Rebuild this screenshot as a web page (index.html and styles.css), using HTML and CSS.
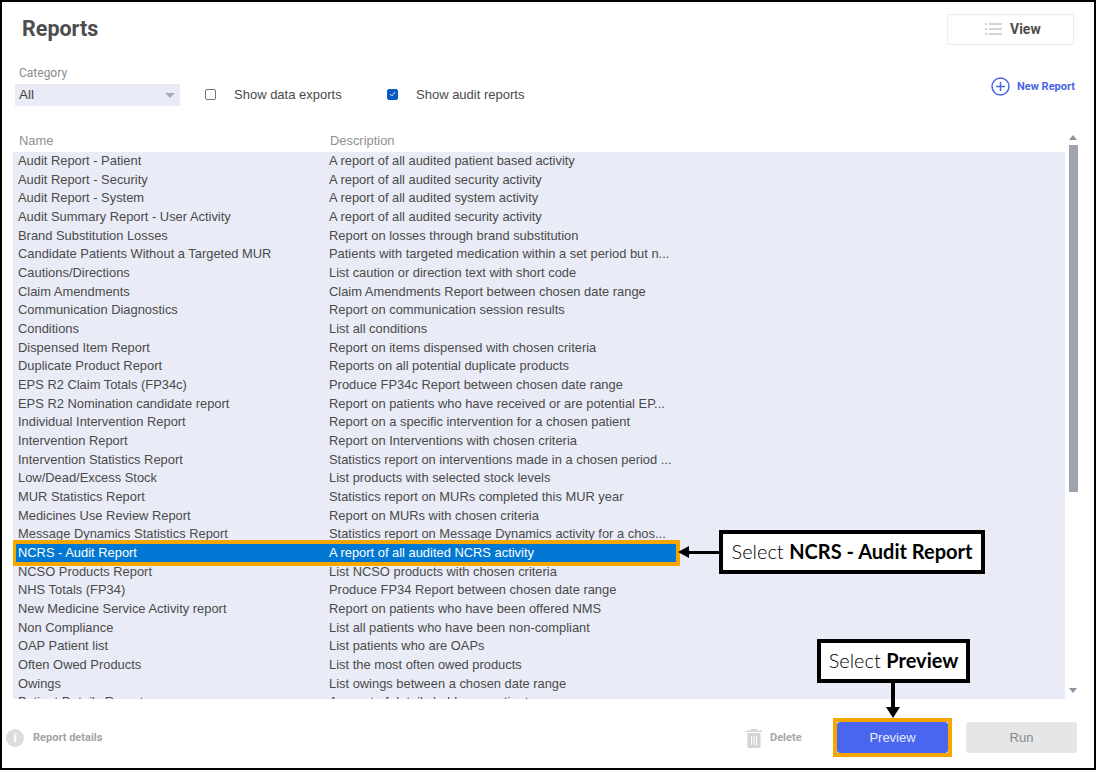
FILE: index.html
```html
<!DOCTYPE html>
<html lang="en">
<head>
<meta charset="utf-8">
<title>Reports</title>
<link rel="stylesheet" href="styles.css">
</head>
<body>
<div class="app">
  <header class="top">
    <h1 class="title">Reports</h1>
    <button class="view-btn">
      <svg class="view-icon" width="17" height="12" viewBox="0 0 17 12"><path d="M0 1h2M4 1h13M0 6h2M4 6h13M0 11h2M4 11h13" stroke="#a8a8a8" stroke-width="1.2" fill="none"/></svg>
      <span>View</span>
    </button>
  </header>
  <section class="filters">
    <div class="category">
      <label class="cat-label">Category</label>
      <div class="select"><span>All</span><i class="caret"></i></div>
    </div>
    <div class="check first"><i class="box"></i><span>Show data exports</span></div>
    <div class="check second">
      <i class="box on"><svg width="7" height="6" viewBox="0 0 7 6"><path d="M1 3l2 2 3-4" stroke="#cfe0f5" stroke-width="1" fill="none"/></svg></i>
      <span>Show audit reports</span>
    </div>
    <div class="new-report">
      <svg width="19" height="19" viewBox="0 0 19 19"><circle cx="9.5" cy="9.5" r="8.5" stroke="#4a66e8" stroke-width="1.5" fill="none"/><path d="M9.5 5v9M5 9.5h9" stroke="#4a66e8" stroke-width="1.5"/></svg>
      <span>New Report</span>
    </div>
  </section>
  <section class="table-wrap">
    <div class="table">
      <div class="thead"><span>Name</span><span>Description</span></div>
      <div class="list">
        <div class="row"><span>Audit Report - Patient</span><span>A report of all audited patient based activity</span></div>
        <div class="row"><span>Audit Report - Security</span><span>A report of all audited security activity</span></div>
        <div class="row"><span>Audit Report - System</span><span>A report of all audited system activity</span></div>
        <div class="row"><span>Audit Summary Report - User Activity</span><span>A report of all audited security activity</span></div>
        <div class="row"><span>Brand Substitution Losses</span><span>Report on losses through brand substitution</span></div>
        <div class="row"><span>Candidate Patients Without a Targeted MUR</span><span>Patients with targeted medication within a set period but n...</span></div>
        <div class="row"><span>Cautions/Directions</span><span>List caution or direction text with short code</span></div>
        <div class="row"><span>Claim Amendments</span><span>Claim Amendments Report between chosen date range</span></div>
        <div class="row"><span>Communication Diagnostics</span><span>Report on communication session results</span></div>
        <div class="row"><span>Conditions</span><span>List all conditions</span></div>
        <div class="row"><span>Dispensed Item Report</span><span>Report on items dispensed with chosen criteria</span></div>
        <div class="row"><span>Duplicate Product Report</span><span>Reports on all potential duplicate products</span></div>
        <div class="row"><span>EPS R2 Claim Totals (FP34c)</span><span>Produce FP34c Report between chosen date range</span></div>
        <div class="row"><span>EPS R2 Nomination candidate report</span><span>Report on patients who have received or are potential EP...</span></div>
        <div class="row"><span>Individual Intervention Report</span><span>Report on a specific intervention for a chosen patient</span></div>
        <div class="row"><span>Intervention Report</span><span>Report on Interventions with chosen criteria</span></div>
        <div class="row"><span>Intervention Statistics Report</span><span>Statistics report on interventions made in a chosen period ...</span></div>
        <div class="row"><span>Low/Dead/Excess Stock</span><span>List products with selected stock levels</span></div>
        <div class="row"><span>MUR Statistics Report</span><span>Statistics report on MURs completed this MUR year</span></div>
        <div class="row"><span>Medicines Use Review Report</span><span>Report on MURs with chosen criteria</span></div>
        <div class="row"><span>Message Dynamics Statistics Report</span><span>Statistics report on Message Dynamics activity for a chos...</span></div>
        <div class="row selected"><span>NCRS - Audit Report</span><span>A report of all audited NCRS activity</span><i class="hl-row"></i></div>
        <div class="row"><span>NCSO Products Report</span><span>List NCSO products with chosen criteria</span></div>
        <div class="row"><span>NHS Totals (FP34)</span><span>Produce FP34 Report between chosen date range</span></div>
        <div class="row"><span>New Medicine Service Activity report</span><span>Report on patients who have been offered NMS</span></div>
        <div class="row"><span>Non Compliance</span><span>List all patients who have been non-compliant</span></div>
        <div class="row"><span>OAP Patient list</span><span>List patients who are OAPs</span></div>
        <div class="row"><span>Often Owed Products</span><span>List the most often owed products</span></div>
        <div class="row"><span>Owings</span><span>List owings between a chosen date range</span></div>
        <div class="row"><span>Patient Details Report</span><span>A report of details held on a patient</span></div>
      </div>
    </div>
    <div class="scrollbar">
      <i class="arrow up"></i>
      <div class="track"><div class="thumb"></div></div>
      <i class="arrow down"></i>
    </div>
  </section>
  <footer class="bottom">
    <div class="details"><i class="info">i</i><span>Report details</span></div>
    <div class="delete">
      <svg width="16" height="20" viewBox="0 0 16 20"><path d="M5 1h6v1.5h5V4H0V2.500h5zM1.500 5h13v15h-13z" fill="#d4d4d4"/><path d="M5.500 8v9M8 8v9M10.500 8v9" stroke="#fff" stroke-width="1"/></svg>
      <span>Delete</span>
    </div>
    <button class="btn preview">Preview<i class="hl-btn"></i></button>
    <button class="btn run">Run</button>
  </footer>
  <div class="callout callout-ncrs">Select <b>NCRS - Audit Report</b></div>
  <div class="arrow-left"></div>
  <div class="callout callout-preview">Select <b>Preview</b></div>
  <div class="arrow-down"></div>
</div>
</body>
</html>
```
FILE: styles.css
```css
* { box-sizing: border-box; }
html, body { margin: 0; padding: 0; background: #fff; }
.app {
  position: relative;
  width: 1096px;
  height: 770px;
  border: 2px solid #000;
  overflow: hidden;
  font-family: "Liberation Sans", Arial, sans-serif;
  color: #4a4a4a;
  display: flex;
  flex-direction: column;
}
.top {
  display: flex;
  justify-content: space-between;
  align-items: flex-start;
  height: 62px;
  padding: 12px 20px 0 20px;
}
.title {
  margin: 0;
  font: 700 21.5px/30px Roboto, sans-serif;
  color: #4d4d4d;
}
.view-btn {
  width: 127px;
  height: 31px;
  background: #fff;
  border: 1px solid #ececec;
  display: flex;
  align-items: center;
  padding: 0 0 2px 37px;
  gap: 8px;
  font: 700 14px Roboto, sans-serif;
  color: #4d4d4d;
}
.filters {
  display: flex;
  align-items: flex-end;
  height: 42px;
  padding-left: 13px;
}
.category { width: 165px; }
.cat-label {
  display: block;
  padding-left: 4px;
  height: 20px;
  font: 12px/18px Roboto, sans-serif;
  color: #8c8c8c;
}
.select {
  height: 22px;
  background: #e9ecf6;
  display: flex;
  align-items: center;
  justify-content: space-between;
  padding: 0 5px 2px 4px;
  font-size: 13.5px;
  color: #444;
}
.caret {
  width: 0;
  height: 0;
  margin-top: 2px;
  border-left: 5px solid transparent;
  border-right: 5px solid transparent;
  border-top: 5px solid #a9adb8;
}
.check {
  display: flex;
  align-items: center;
  height: 22px;
  padding-bottom: 2px;
  gap: 18px;
  font-size: 13px;
  color: #4a4a4a;
}
.first { margin-left: 25px; width: 182px; }
.second { width: 570px; }
.box {
  width: 11px;
  height: 11px;
  border: 1px solid #767676;
  border-radius: 2px;
  background: #fff;
  display: flex;
  align-items: center;
  justify-content: center;
}
.box.on { background: #0a5cc2; border-color: #0a5cc2; }
.new-report {
  position: absolute;
  right: 19px;
  top: 75px;
  display: flex;
  align-items: center;
  gap: 7px;
  font: 700 11px Roboto, sans-serif;
  color: #4a66e8;
}
.table-wrap {
  display: flex;
  height: 571px;
  margin-top: 24px;
  padding-left: 11px;
}
.table {
  width: 1052px;
  height: 571px;
  overflow: hidden;
}
.thead {
  display: grid;
  grid-template-columns: 311px 1fr;
  height: 22px;
  padding: 2px 0 0 6px;
  font: 12.9px/18px "Liberation Sans", Arial, sans-serif;
  color: #8f8f8f;
}
.list {
  height: 547px;
  background: #e9ecf6;
  overflow: hidden;
}
.row {
  position: relative;
  display: grid;
  grid-template-columns: 316px 348px;
  height: 18.68px;
  font-size: 12.9px;
  line-height: 18.68px;
  color: #4a4a4a;
  white-space: nowrap;
}
.row span:first-child { padding-left: 5px; }
.selected span { background: #0078d4; color: #fff; }
.hl-row {
  position: absolute;
  left: -1px;
  top: -4px;
  width: 668px;
  height: 26px;
  border: 4px solid #f7a600;
}
.scrollbar {
  width: 14px;
  margin-left: 1px;
  display: flex;
  flex-direction: column;
  align-items: center;
  padding-top: 5px;
}
.arrow {
  width: 0;
  height: 0;
  border-left: 4px solid transparent;
  border-right: 4px solid transparent;
}
.arrow.up { border-bottom: 5px solid #8e94a3; }
.arrow.down { border-top: 5px solid #8e94a3; }
.track { width: 9px; height: 548px; padding-top: 5px; }
.thumb { height: 347px; background: #9fa4ae; }
.bottom {
  display: flex;
  align-items: center;
  height: 39px;
  margin-top: 17px;
  padding: 0 17px 0 4px;
}
.details {
  display: flex;
  align-items: center;
  gap: 9px;
  width: 740px;
  font: 700 11px Roboto, sans-serif;
  color: #a3a3a3;
}
.info {
  width: 18px;
  height: 18px;
  border-radius: 50%;
  background: #dcdcdc;
  color: #fff;
  text-align: center;
  font: 700 13px/18px "Liberation Sans", sans-serif;
}
.delete {
  display: flex;
  align-items: center;
  gap: 8px;
  width: 91px;
  font: 700 11px Roboto, sans-serif;
  color: #a8a8a8;
}
.btn {
  position: relative;
  width: 111px;
  height: 31px;
  border: 0;
  border-radius: 3px;
  font: 13px "Liberation Sans", sans-serif;
}
.preview { background: #4a66ee; color: #e6eaff; margin-right: 18px; }
.run { background: #e4e6e8; color: #8a8a8a; }
.hl-btn {
  position: absolute;
  left: -4px;
  top: -4px;
  width: 119px;
  height: 39px;
  border: 4px solid #f7a600;
}
.callout {
  position: absolute;
  height: 44px;
  border: 4px solid #000;
  background: #fff;
  font: 300 20px/35px Lato, sans-serif;
  color: #000;
  text-align: center;
  white-space: nowrap;
}
.callout b { font-weight: 700; color: #000; }
.callout-ncrs { left: 717px; top: 528px; width: 266px; }
.callout-preview { left: 815px; top: 637px; width: 153px; }
.arrow-left {
  position: absolute;
  left: 687px;
  top: 549px;
  width: 31px;
  height: 3px;
  background: #000;
}
.arrow-left::before {
  content: "";
  position: absolute;
  left: -11px;
  top: -5px;
  border-top: 6.5px solid transparent;
  border-bottom: 6.5px solid transparent;
  border-right: 11px solid #000;
}
.arrow-down {
  position: absolute;
  left: 889px;
  top: 680px;
  width: 4px;
  height: 26px;
  background: #000;
}
.arrow-down::after {
  content: "";
  position: absolute;
  left: -5px;
  bottom: -10px;
  border-left: 7px solid transparent;
  border-right: 7px solid transparent;
  border-top: 11px solid #000;
}
```
